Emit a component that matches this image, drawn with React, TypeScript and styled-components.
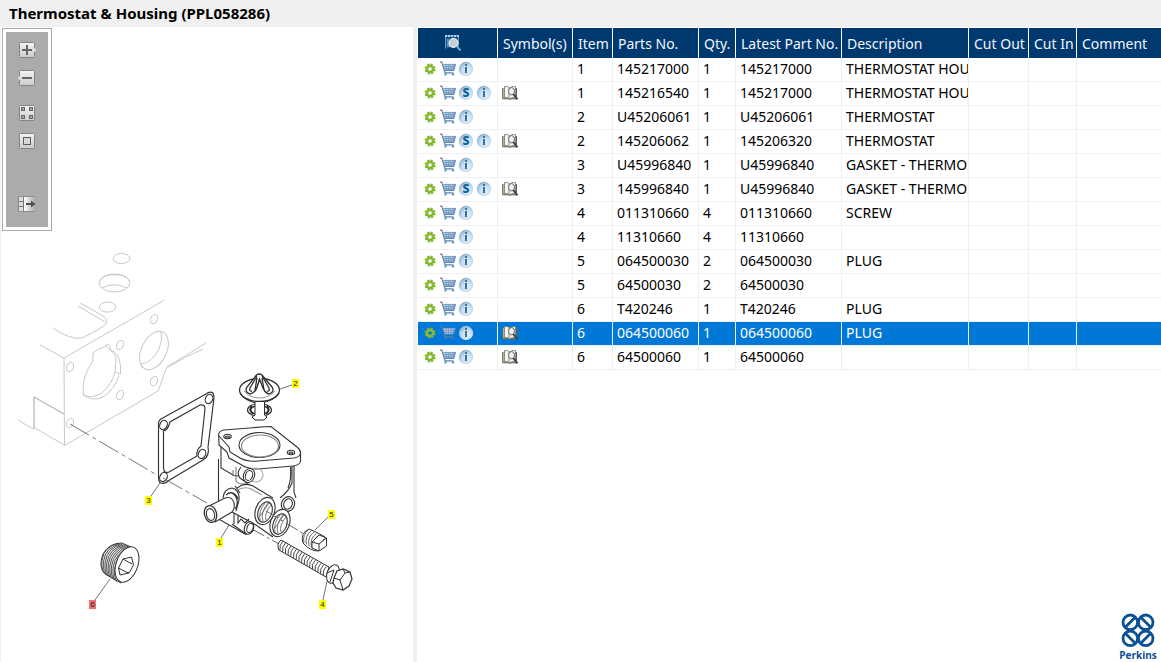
import React from "react";
import styled, { createGlobalStyle } from "styled-components";

const GlobalStyle = createGlobalStyle`
  * { box-sizing: border-box; }
  body {
    margin: 0;
    background: #ffffff;
    color: #000000;
    font-family: "Noto Sans", "Segoe UI", sans-serif;
    font-size: 14px;
  }
`;

const Page = styled.div`
  display: flex;
  flex-direction: column;
  min-height: 100vh;
`;

const TitleBar = styled.header`
  background: #f0f0f0;
  padding: 3px 9px 4px;
`;

const Title = styled.h1`
  margin: 0;
  font-size: 15px;
  line-height: 20px;
  font-weight: 700;
`;

const Main = styled.main`
  flex: 1;
  display: grid;
  grid-template-columns: 417px minmax(0, 1fr);
`;

const DrawingPane = styled.section`
  border-left: 1px solid #f0f0f0;
  border-right: 4px solid #f0f0f0;
  padding: 1px 0 0 1px;
`;

const Toolbar = styled.div`
  width: 50px;
  border: 1px solid #a9a9a9;
  padding: 3px;
`;

const ToolbarInner = styled.div`
  display: flex;
  flex-direction: column;
  align-items: center;
  gap: 8px;
  background: #ababab;
  padding: 8px 0 13px;
`;

const ToolButton = styled.button<{ $before?: number }>`
  display: block;
  width: 20px;
  height: 20px;
  padding: 0;
  border: 0;
  background: none;
  margin-top: ${(p) => p.$before ?? 0}px;
  svg { display: block; }
`;

const Canvas = styled.div`
  position: relative;
  svg { display: block; }
`;

const Callout = styled.button<{ $x: number; $y: number; $active?: boolean }>`
  position: absolute;
  left: ${(p) => p.$x}px;
  top: ${(p) => p.$y}px;
  width: 7px;
  height: 9px;
  padding: 0;
  border: 0;
  background: ${(p) => (p.$active ? "#f07070" : "#ffff00")};
  color: #222222;
  font: 8px/9px "Liberation Sans", sans-serif;
  text-align: center;
`;

const PartsPane = styled.section`
  display: flex;
  flex-direction: column;
  justify-content: space-between;
  padding: 1px 0 0 1px;
`;

const PartsTable = styled.table`
  width: 100%;
  table-layout: fixed;
  border-collapse: separate;
  border-spacing: 0;
`;

const Column = styled.col<{ $width?: number }>`
  width: ${(p) => (p.$width ? `${p.$width}px` : "auto")};
`;

const HeadCell = styled.th`
  height: 30px;
  padding: 2px 0 0 5px;
  background: #003970;
  color: #f2f6fa;
  border-right: 1px solid #ffffff;
  font-weight: 400;
  text-align: left;
  line-height: 20px;
  white-space: nowrap;
  overflow: hidden;
  &:first-child { padding: 0 10px 0 0; }
  &:first-child svg { display: block; margin: 0 auto; }
  &:last-child { border-right: 0; }
`;

const Row = styled.tr<{ $selected: boolean }>`
  background: ${(p) => (p.$selected ? "#0078d7" : "#ffffff")};
  color: ${(p) => (p.$selected ? "#ffffff" : "#000000")};
`;

const Cell = styled.td`
  height: 24px;
  padding: 0 0 1px 4px;
  border-right: 1px solid #f0f0f0;
  border-bottom: 1px solid #f0f0f0;
  line-height: 20px;
  white-space: nowrap;
  overflow: hidden;
  &:last-child { border-right: 0; }
`;

const Actions = styled.div`
  display: flex;
  align-items: center;
  gap: 2px;
  height: 20px;
`;

const IconButton = styled.button`
  width: 16px;
  height: 16px;
  padding: 0;
  border: 0;
  background: none;
  svg { display: block; }
`;

const Logo = styled.div`
  align-self: flex-end;
  width: 42px;
  margin-right: 2px;
  color: #0b4f96;
  text-align: center;
  svg { display: block; margin: 0 auto; }
`;

const LogoName = styled.div`
  font: 700 10px/14px "Open Sans", sans-serif;
`;

/* ---------- toolbar icons ---------- */

type ToolKind = "in" | "out" | "fit" | "actual" | "panel";

function ToolIcon({ kind }: { kind: ToolKind }) {
  return (
    <svg width="20" height="20" viewBox="0 0 20 20">
      <defs>
        <linearGradient id={`face-${kind}`} x1="0" y1="0" x2="0" y2="1">
          <stop offset="0" stopColor="#f4f4f4" />
          <stop offset="1" stopColor="#cccccc" />
        </linearGradient>
        <linearGradient id="fade" x1="0" y1="0" x2="1" y2="0">
          <stop offset="0" stopColor="#ffffff" />
          <stop offset="1" stopColor="#ababab" />
        </linearGradient>
      </defs>
      {kind !== "panel" && (
        <rect x="2.5" y="2.5" width="15" height="15" rx="1" fill={`url(#face-${kind})`} stroke="#858585" />
      )}
      {kind === "in" && (
        <>
          <path d="M17 7l3 3-3 3z" fill="#e4e4e4" stroke="#8c8c8c" strokeWidth="0.600" />
          <path d="M16 8h1.500v4H16z" fill="#dddddd" />
          <path d="M10 5v10M5 10h10" stroke="#666666" strokeWidth="2" />
        </>
      )}
      {kind === "out" && (
        <>
          <path d="M3 7l-3 3 3 3z" fill="#e4e4e4" stroke="#8c8c8c" strokeWidth="0.600" />
          <path d="M2.500 8H4v4H2.500z" fill="#dddddd" />
          <path d="M5 10h10" stroke="#666666" strokeWidth="2" />
        </>
      )}
      {kind === "fit" && (
        <g fill="#a5a5a5" stroke="#666666">
          <rect x="4.500" y="4.500" width="3" height="3" />
          <rect x="12.500" y="4.500" width="3" height="3" />
          <rect x="4.500" y="12.500" width="3" height="3" />
          <rect x="12.500" y="12.500" width="3" height="3" />
        </g>
      )}
      {kind === "actual" && <rect x="6.500" y="6.500" width="7" height="7" fill="#d8d8d8" stroke="#5c5c5c" />}
      {kind === "panel" && (
        <>
          <rect x="7" y="2.500" width="11" height="15" fill="url(#fade)" />
          <path d="M18 2.500H1.500v15H18" fill="none" stroke="#8c8c8c" />
          <rect x="2" y="3" width="4" height="14" fill="#dddddd" />
          <path d="M2 7.500h4M2 12.500h4M6.500 3v14" stroke="#777777" />
          <path d="M9 10h6" stroke="#505050" strokeWidth="2" />
          <path d="M14 6.500l4.500 3.500-4.500 3.500z" fill="#505050" />
        </>
      )}
    </svg>
  );
}

/* ---------- row icons ---------- */

function GearIcon() {
  return (
    <svg width="16" height="16" viewBox="0 0 16 16">
      <circle cx="8" cy="8" r="4.500" fill="none" stroke="#7cb02e" strokeWidth="2" strokeDasharray="2.100 1.434" />
      <circle cx="8" cy="8" r="3.100" fill="none" stroke="#86ba33" strokeWidth="2.600" />
    </svg>
  );
}

function CartIcon() {
  return (
    <svg width="16" height="16" viewBox="0 0 16 16" fill="none">
      <path d="M3 3h12.500l-2 6H5z" fill="#bccfe4" />
      <path d="M3 3.400h12.500M3.500 5.400h11.500M4 7.400h10M6.200 3v6M8.500 3v6M10.800 3v6M13 3v6" stroke="#6a8fbd" strokeWidth="0.700" />
      <path d="M0 1.200h1.800l3.200 10.600h8.500M15.500 3l-2 6.300H5" stroke="#5580b2" strokeWidth="1.200" />
      <circle cx="5.500" cy="13.500" r="1.100" fill="#4b78ac" />
      <circle cx="13" cy="13.500" r="1.100" fill="#4b78ac" />
    </svg>
  );
}

function Badge({ kind }: { kind: "info" | "super" }) {
  return (
    <svg width="16" height="16" viewBox="0 0 16 16">
      <defs>
        <radialGradient id="disc" cx="0.600" cy="0.650" r="0.650">
          <stop offset="0" stopColor="#e6f1f9" />
          <stop offset="0.600" stopColor="#c5dcef" />
          <stop offset="1" stopColor="#86b3d8" />
        </radialGradient>
      </defs>
      <circle cx="8" cy="8" r="7.200" fill="url(#disc)" />
      {kind === "info" ? (
        <g fill="#38729f">
          <rect x="7" y="3" width="2" height="2" />
          <rect x="7" y="6" width="2" height="6" />
        </g>
      ) : (
        <text
          x="8"
          y="12"
          textAnchor="middle"
          fontFamily="Open Sans, sans-serif"
          fontSize="12"
          fontWeight="800"
          fill="#0d689c"
        >
          S
        </text>
      )}
    </svg>
  );
}

function BookIcon() {
  return (
    <svg width="16" height="16" viewBox="0 0 16 16" fill="none">
      <path d="M0.700 3v10.800h6.300l1 .7 1-.7h5.500V3" fill="#c9c6b4" stroke="#5f5e4e" />
      <path d="M2.500 1.500q3.500-.5 5.500 1.500 2-2 5.500-1.500v11q-3.500-.5-5.500 1.200-2-1.700-5.500-1.200z" fill="#f6f5ef" stroke="#77766a" strokeWidth="0.800" />
      <path d="M7 3v10" stroke="#8e8c7c" />
      <ellipse cx="9.500" cy="6.200" rx="3" ry="3.700" fill="#eef0f1" stroke="#666666" />
      <path d="M11.300 9.200l4.200 5.300" stroke="#444444" strokeWidth="2" />
    </svg>
  );
}

function FindIcon() {
  return (
    <svg width="18" height="18" viewBox="0 0 18 18" fill="none">
      <path d="M1.500 14.500v-13h13v11" fill="#1b568d" stroke="#5b9cc8" />
      <path d="M1 2h14" stroke="#a8d4ee" strokeWidth="2" strokeDasharray="2 1" />
      <path d="M3 6h2M3 8h2M3 10h2M3 12h3" stroke="#a6cbe2" />
      <circle cx="9.500" cy="9" r="4.300" fill="#c3cdd6" stroke="#eef2f5" strokeWidth="1.200" />
      <path d="M13 12.500l3.500 4" stroke="#6eaad4" strokeWidth="2" />
    </svg>
  );
}

/* ---------- exploded drawing ---------- */

const boltThreads = Array.from({ length: 17 }, (_, i) => ({ x: 281 + i * 2.7, y: 544 + i * 1.6 }));
const plugThreads = Array.from({ length: 9 }, (_, i) => i);

function EngineBlock() {
  return (
    <g stroke="#c2c2c2" strokeWidth="0.900">
      <ellipse cx="121.500" cy="258.500" rx="8.300" ry="5" />
      <ellipse cx="114.500" cy="283" rx="15.300" ry="9" />
      <path d="M99.500 281Q104 274 114.500 274.800Q126 274 129.500 281M102 288Q114 281.500 127 288" />
      <ellipse cx="107.500" cy="307" rx="8.300" ry="5" />
      <path d="M80 303L103 316Q108 319 106 324Q104 327 82 338Q70 340 53 328M78 306L105 322" />
      <path d="M40 345L64 358L164.500 300M64 358L64.500 445.500L158 391L167 367L206 343M168 367L186 357L203 349" />
      <path d="M18 420L33 429M35 428L65 445.500" />
      <path d="M34 429V397L64 414" stroke="#999999" />
      {[[70, 367], [120, 345], [154, 319], [154, 381], [120, 395], [70, 423]].map(([x, y]) => (
        <ellipse key={`${x}-${y}`} cx={x} cy={y} rx="3.300" ry="4.800" transform={`rotate(25 ${x} ${y})`} />
      ))}
      <ellipse cx="154" cy="350.500" rx="12.500" ry="20.500" transform="rotate(26 154 350.500)" />
      <path d="M161 332Q163 340 159 349Q152 363 141 364" />
      <path d="M83.500 395Q81 377 93 361V353Q97 349 106 346L107 344Q110 344 110.500 350Q119 352 120.500 366V374L115 372Q112 384 102 393Q92 399 83.500 395Q92 402 103 397Q115 389 119 375M110 350L106 346M115 372L116 360Q116 354 111 351" />
    </g>
  );
}

function Gasket() {
  return (
    <g stroke="#333333" strokeWidth="1.150">
      <path d="M158.500 425Q158 421 161 419L206 394Q210 391 213 393Q214.500 396 213.500 402L208 447Q210 456 203 460L168 481Q164 485 160 482.500Q158.500 481 158.500 478Z" />
      <path d="M163.500 431Q168 430 170 422L200 405Q205 404 205 409L201 446Q196 450 197 456L169 472Q164 474 163.500 468Z" />
      {[[163.500, 425], [209, 399], [202, 454], [163.500, 477]].map(([x, y]) => (
        <ellipse key={`${x}-${y}`} cx={x} cy={y} rx="3.600" ry="4.800" transform={`rotate(25 ${x} ${y})`} />
      ))}
    </g>
  );
}

function Thermostat() {
  return (
    <g stroke="#2e2e2e">
      <ellipse cx="259.500" cy="390" rx="20" ry="11.500" strokeWidth="1.300" fill="#ffffff" />
      <path d="M240 393Q247 403 259.500 403Q273 402 279 393" strokeWidth="1.200" />
      <path d="M244 391Q250 398 259.500 398Q269 398 275 391" stroke="#999999" />
      <path d="M256.500 375L247 387Q244 392 250 394Q256 393 258 384L259.500 379L261.500 384Q264 393 269 394Q275 392 272 387L262 375Q259 373 256.500 375Z" strokeWidth="1.300" fill="#ffffff" />
      <path d="M257 376L250 388Q249 392 252 391M262 376L269 388Q270 392 267 391M257 378L255 390M262 378L264 390" strokeWidth="1.300" />
      <ellipse cx="259.500" cy="410" rx="12" ry="6.500" fill="#ffffff" strokeWidth="1.200" />
      <ellipse cx="259.500" cy="410" rx="9" ry="4.500" strokeWidth="1.500" />
      <path d="M255 402V415L252 417L255 420H264L267 417L264.500 415V402" fill="#ffffff" />
      <path d="M252 406Q248 410 253 414M267 406Q271 410 266 414" strokeWidth="1.800" />
    </g>
  );
}

function Housing() {
  return (
    <g stroke="#333333" strokeWidth="1.100">
      <path d="M218.500 459V519L246 534.500M221 447V468L234 475.500L238 476" />
      <path d="M292 465V483Q289 491 280 498M290.500 467Q291.500 480 288 488M294 463V492L296 498" />
      <ellipse cx="288" cy="504" rx="6.500" ry="7.500" transform="rotate(20 288 504)" fill="#ffffff" />
      <ellipse cx="288" cy="504" rx="4.200" ry="5.300" transform="rotate(20 288 504)" />
      <path d="M218.700 434Q219 431 224 430L264 426.800L271 426.500L297 447Q301 450 300.500 454V461Q300 465 293 466L258 469Q247 469 240 464L229 458L227 452L219 445Z" fill="#ffffff" />
      <path d="M219 436L229 447L230 452L240 458Q247 462 258 461L294 458Q300 457 300.500 453" />
      <ellipse cx="259.500" cy="445" rx="20.500" ry="12.500" />
      <ellipse cx="260" cy="446" rx="18.500" ry="11" stroke="#888888" />
      <ellipse cx="227.500" cy="436.500" rx="3.700" ry="2.200" />
      <ellipse cx="227.500" cy="437" rx="2" ry="1" />
      <ellipse cx="291" cy="452.500" rx="3.700" ry="2.200" />
      <ellipse cx="291" cy="453" rx="2" ry="1" />
      <path d="M236 467V481Q240 486 249 483M233 470V476" stroke="#777777" />
      <ellipse cx="256" cy="475" rx="7" ry="7" stroke="#aaaaaa" />
      <path d="M241 467Q236 473 240 478L247 483" />
      <ellipse cx="249" cy="475.500" rx="5.500" ry="7.200" transform="rotate(20 249 475.500)" fill="#ffffff" />
      <ellipse cx="249" cy="475.500" rx="3.500" ry="5" transform="rotate(20 249 475.500)" />
      <path d="M237 488Q245 482 253 486L273 498M235 486L240 493" />
      <path d="M236 491Q245 485 253 490L262 495" stroke="#999999" />
      <path d="M223 498Q224 489 232 488Q240 490 239 500L236 511M226 495Q232 490 236 497Q239 504 235 509M228 493Q235 491 238 499" />
      <path d="M205 508L225 498Q232 496 234 503Q235 509 232 512L215 522" fill="#ffffff" />
      <ellipse cx="210.500" cy="514" rx="6" ry="8.500" transform="rotate(-15 210.500 514)" fill="#ffffff" strokeWidth="1.300" />
      <ellipse cx="210.500" cy="514.500" rx="4" ry="6" transform="rotate(-15 210.500 514.500)" />
      <path d="M232 512L256 525L273 537M234 513V524M238 515V523L241 519L245 523L249 519" />
      <ellipse cx="280" cy="523" rx="9.500" ry="14" transform="rotate(20 280 523)" fill="#ffffff" />
      <ellipse cx="280" cy="524" rx="6.800" ry="10.500" transform="rotate(20 280 524)" />
      <path d="M275 532Q273 524 280 515M278 533Q275 525 283 515M281 532Q279 525 286 517M275 528L284 515" stroke="#666666" strokeWidth="0.900" />
      <ellipse cx="265" cy="511" rx="9.500" ry="14" transform="rotate(20 265 511)" fill="#ffffff" />
      <ellipse cx="265" cy="512" rx="6.800" ry="10.500" transform="rotate(20 265 512)" />
      <path d="M260 520Q258 512 265 503M263 521Q260 513 268 503M266 520Q264 513 271 505M260 516L269 503" stroke="#666666" strokeWidth="0.900" />
      <path d="M232 524L246 534L254 530" />
      <ellipse cx="249" cy="528" rx="4.500" ry="6.500" transform="rotate(20 249 528)" fill="#ffffff" />
      <ellipse cx="250" cy="528" rx="3" ry="4.800" transform="rotate(20 250 528)" />
    </g>
  );
}

function Fasteners() {
  return (
    <g stroke="#333333">
      <path d="M303 543Q300 533 309 529L316 532L325 537L318 551Q310 551 303 543Z" fill="#ffffff" />
      {[0, 1, 2, 3, 4].map((i) => (
        <path key={i} d={`M${304 + i * 2.5} ${543 + i * 1.5}Q${302 + i * 2.5} ${535 + i} ${309 + i * 2.5} ${529 + i * 1.5}`} stroke="#666666" />
      ))}
      <path d="M312 542L319 535L326.500 538V546L319 551L312 548ZM312 542L319 544L326.500 538M319 544V551" fill="#ffffff" />
      <path d="M281 540L329 567L326 577L279 550Q276 544 281 540Z" fill="#ffffff" />
      {boltThreads.map((t) => (
        <path key={t.x} d={`M${t.x + 2} ${t.y - 3}q-4 4 -3 9`} strokeWidth="0.900" />
      ))}
      <ellipse cx="333" cy="574" rx="6" ry="9.500" transform="rotate(20 333 574)" fill="#ffffff" />
      <path d="M327 573L334 570L330 582" />
      <path d="M334 578L337 571L343 569L350 572L352 579L349 586L343 590L336 588L333 583Z" fill="#ffffff" strokeWidth="1.200" />
      <path d="M334 578L340 580L343 590M340 580L345 573L350 572M345 573L343 569" />
    </g>
  );
}

function SocketPlug() {
  return (
    <g stroke="#333333">
      <path d="M122 543Q109 543 103 554Q98 567 105 574L121 583L135 549Z" fill="#e8e8e8" />
      {plugThreads.map((i) => (
        <path
          key={i}
          d={`M${119 + i * 1.6} ${543.500 + i * 0.4}Q${104 + i * 1.6} ${546 + i} ${102 + i * 1.6} ${560 + i}Q${101 + i * 1.6} ${569 + i} ${104 + i * 1.6} ${573 + i * 1.1}`}
          stroke="#4a4a4a"
          strokeWidth="0.900"
        />
      ))}
      <ellipse cx="127" cy="564.500" rx="10.800" ry="18.500" transform="rotate(20 127 564.500)" fill="#ffffff" />
      <path d="M118.500 568L123 559L131.500 557L133.500 565L129 573L120 575Z M118.500 568L126 572L129 573M123 559L132 564" />
    </g>
  );
}

function ExplodedView() {
  return (
    <svg width="411" height="400" viewBox="2 231 411 400" fill="none" role="img" aria-label="Thermostat and housing exploded view">
      <EngineBlock />
      <path d="M70 424L157 475" stroke="#777777" strokeDasharray="22 4 4 4" />
      <Gasket />
      <Thermostat />
      <Housing />
      <path d="M163 478L207 503" stroke="#777777" strokeDasharray="22 4 4 4" />
      <path d="M266 511L304 534M252 529L279 544" stroke="#666666" strokeDasharray="14 3 3 3" />
      <Fasteners />
      <SocketPlug />
      <path d="M280 389L292 385M151 496L160 483M221 538L229 525M315 530L328 517M323 600L327 581M95 600L110 579" stroke="#666666" strokeWidth="0.900" />
    </svg>
  );
}

const callouts = [
  { item: "2", x: 292, y: 379 },
  { item: "3", x: 145, y: 496 },
  { item: "1", x: 216, y: 538 },
  { item: "5", x: 328, y: 510 },
  { item: "4", x: 319, y: 600 },
  { item: "6", x: 89, y: 600, active: true },
];

/* ---------- logo ---------- */

function PerkinsMark() {
  return (
    <svg width="34" height="35" viewBox="0 0 34 35" fill="none" stroke="#0b4f96" strokeWidth="2.800">
      <circle cx="9.300" cy="9.300" r="7.300" />
      <circle cx="24.700" cy="9.300" r="7.300" />
      <circle cx="9.300" cy="25.300" r="7.300" />
      <circle cx="24.700" cy="25.300" r="7.300" />
      <path d="M4.500 14L14 4.500M20 4.500L29.500 14M4.500 20.500L14 30M20 30l9.500-9.500" />
    </svg>
  );
}

/* ---------- parts list ---------- */

interface Part {
  item: string;
  no: string;
  qty: string;
  latest: string;
  description?: string;
  superseded?: boolean;
  symbol?: boolean;
  selected?: boolean;
}

const parts: Part[] = [
  { item: "1", no: "145217000", qty: "1", latest: "145217000", description: "THERMOSTAT HOUSING" },
  { item: "1", no: "145216540", qty: "1", latest: "145217000", description: "THERMOSTAT HOUSING", superseded: true, symbol: true },
  { item: "2", no: "U45206061", qty: "1", latest: "U45206061", description: "THERMOSTAT" },
  { item: "2", no: "145206062", qty: "1", latest: "145206320", description: "THERMOSTAT", superseded: true, symbol: true },
  { item: "3", no: "U45996840", qty: "1", latest: "U45996840", description: "GASKET - THERMOSTAT" },
  { item: "3", no: "145996840", qty: "1", latest: "U45996840", description: "GASKET - THERMOSTAT", superseded: true, symbol: true },
  { item: "4", no: "011310660", qty: "4", latest: "011310660", description: "SCREW" },
  { item: "4", no: "11310660", qty: "4", latest: "11310660" },
  { item: "5", no: "064500030", qty: "2", latest: "064500030", description: "PLUG" },
  { item: "5", no: "64500030", qty: "2", latest: "64500030" },
  { item: "6", no: "T420246", qty: "1", latest: "T420246", description: "PLUG" },
  { item: "6", no: "064500060", qty: "1", latest: "064500060", description: "PLUG", symbol: true, selected: true },
  { item: "6", no: "64500060", qty: "1", latest: "64500060", symbol: true },
];

const columnWidths = [80, 75, 40, 86, 37, 106, 127, 60, 48, undefined];
const headings = ["Symbol(s)", "Item", "Parts No.", "Qty.", "Latest Part No.", "Description", "Cut Out", "Cut In", "Comment"];

function PartRow({ part }: { part: Part }) {
  return (
    <Row $selected={!!part.selected}>
      <Cell>
        <Actions>
          <IconButton aria-label="Options"><GearIcon /></IconButton>
          <IconButton aria-label="Add to cart"><CartIcon /></IconButton>
          {part.superseded && <IconButton aria-label="Supersession"><Badge kind="super" /></IconButton>}
          <IconButton aria-label="Part information"><Badge kind="info" /></IconButton>
        </Actions>
      </Cell>
      <Cell>
        {part.symbol && (
          <Actions>
            <IconButton aria-label="Look up symbol"><BookIcon /></IconButton>
          </Actions>
        )}
      </Cell>
      <Cell>{part.item}</Cell>
      <Cell>{part.no}</Cell>
      <Cell>{part.qty}</Cell>
      <Cell>{part.latest}</Cell>
      <Cell>{part.description}</Cell>
      <Cell />
      <Cell />
      <Cell />
    </Row>
  );
}

export default function App() {
  return (
    <>
      <GlobalStyle />
      <Page>
        <TitleBar>
          <Title>Thermostat &amp; Housing (PPL058286)</Title>
        </TitleBar>
        <Main>
          <DrawingPane>
            <Toolbar>
              <ToolbarInner>
                <ToolButton aria-label="Zoom in"><ToolIcon kind="in" /></ToolButton>
                <ToolButton aria-label="Zoom out"><ToolIcon kind="out" /></ToolButton>
                <ToolButton aria-label="Fit to window" $before={7}><ToolIcon kind="fit" /></ToolButton>
                <ToolButton aria-label="Actual size"><ToolIcon kind="actual" /></ToolButton>
                <ToolButton aria-label="Toggle parts list" $before={35}><ToolIcon kind="panel" /></ToolButton>
              </ToolbarInner>
            </Toolbar>
            <Canvas>
              <ExplodedView />
              {callouts.map((c) => (
                <Callout key={c.item} $x={c.x - 2} $y={c.y - 231} $active={c.active}>
                  {c.item}
                </Callout>
              ))}
            </Canvas>
          </DrawingPane>
          <PartsPane>
            <PartsTable>
              <colgroup>
                {columnWidths.map((w, i) => (
                  <Column key={i} $width={w} />
                ))}
              </colgroup>
              <thead>
                <tr>
                  <HeadCell aria-label="Actions"><FindIcon /></HeadCell>
                  {headings.map((h) => (
                    <HeadCell key={h}>{h}</HeadCell>
                  ))}
                </tr>
              </thead>
              <tbody>
                {parts.map((p) => (
                  <PartRow key={p.no} part={p} />
                ))}
              </tbody>
            </PartsTable>
            <Logo>
              <PerkinsMark />
              <LogoName>Perkins</LogoName>
            </Logo>
          </PartsPane>
        </Main>
      </Page>
    </>
  );
}
